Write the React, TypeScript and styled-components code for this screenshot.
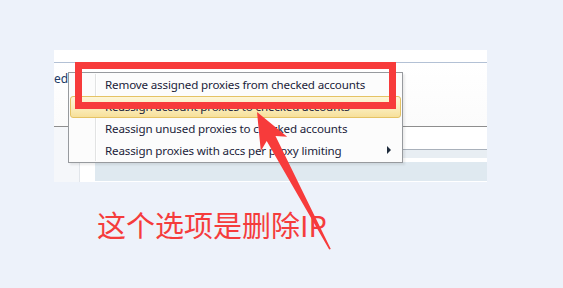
import React from "react";
import styled, { createGlobalStyle } from "styled-components";

const Global = createGlobalStyle`
  html, body { margin: 0; padding: 0; background: #edf2fa; }
  body { font-family: "Noto Sans", "Open Sans", sans-serif; }
`;

const Page = styled.div`
  position: relative;
  width: 563px;
  height: 288px;
  box-sizing: border-box;
  padding: 50px 0 0 54px;
  overflow: hidden;
`;

const Panel = styled.div`
  position: relative;
  width: 433px;
  height: 132px;
  background: #ffffff;
  display: flex;
  flex-direction: column;
`;

const TopStrip = styled.div`
  height: 12px;
  border-bottom: 1px solid #b3c1d5;
  background: #ffffff;
`;

const Toolbar = styled.div`
  height: 63px;
  border-bottom: 1px solid #8e8e8e;
  background: linear-gradient(#ffffff, #fbfbfb);
  display: flex;
  align-items: flex-start;
`;

const Label = styled.span`
  font-size: 12px;
  color: #203a66;
  margin-top: 8px;
  line-height: 16px;
`;

const Lower = styled.div`
  flex: 1;
  display: grid;
  grid-template-columns: 26px 1fr;
`;

const SideColumn = styled.div`
  background: #f5f7fa;
  border-right: 1px solid #e1e5ea;
`;

const ListArea = styled.div`
  display: flex;
  flex-direction: column;
`;

const BlankRow = styled.div`
  height: 22px;
  background: #ffffff;
  border-bottom: 1px solid #a9b1bb;
`;

const Band = styled.div<{ $h: number; $bg: string; $indent?: number }>`
  height: ${(p) => p.$h}px;
  background: ${(p) => p.$bg};
  margin-left: ${(p) => p.$indent ?? 0}px;
`;

const Menu = styled.div`
  position: absolute;
  left: 14px;
  top: 22px;
  width: 335px;
  height: 91px;
  box-sizing: border-box;
  border: 1px solid #979a9e;
  background: #fcfcfc;
  padding: 1px 1px;
  display: flex;
  flex-direction: column;
  box-shadow: 2px 2px 2px rgba(0, 0, 0, 0.08);
`;

const Gutter = styled.div`
  position: absolute;
  left: 26px;
  top: 1px;
  bottom: 1px;
  width: 1px;
  background: #e2e3e3;
  border-right: 1px solid #ffffff;
`;

const Item = styled.div<{ $active?: boolean }>`
  position: relative;
  height: 22px;
  box-sizing: border-box;
  display: flex;
  align-items: center;
  padding-left: 34px;
  padding-right: 8px;
  font-size: 11.6px;
  letter-spacing: -0.15px;
  color: #1b1d3a;
  white-space: nowrap;
  border: 1px solid ${(p) => (p.$active ? "#e5c365" : "transparent")};
  border-radius: 3px;
  background: ${(p) =>
    p.$active
      ? "linear-gradient(#fdf6da 0%, #fbeec0 50%, #f7e09a 100%)"
      : "transparent"};
`;

const ItemText = styled.span`
  flex: 1;
`;

const SubArrow = styled.span`
  width: 0;
  height: 0;
  border-top: 4px solid transparent;
  border-bottom: 4px solid transparent;
  border-left: 4px solid #1f2c3c;
  margin-right: 1px;
`;

const Highlight = styled.div`
  position: absolute;
  left: 21px;
  top: 12px;
  width: 321px;
  height: 47px;
  box-sizing: border-box;
  border: 7px solid #f73b3b;
`;

const Caption = styled.div`
  margin: 28px 0 0 43px;
  font-family: "Noto Sans CJK SC", "Noto Sans", sans-serif;
  font-size: 29px;
  line-height: 29px;
  color: #f53c3c;
  white-space: nowrap;
`;

const ArrowSvg = styled.svg`
  position: absolute;
  left: 0;
  top: 0;
  pointer-events: none;
`;

export default function App() {
  return (
    <>
      <Global />
      <Page>
        <Panel>
          <TopStrip />
          <Toolbar>
            <Label>ed</Label>
          </Toolbar>
          <Lower>
            <SideColumn />
            <ListArea>
              <BlankRow />
              <Band $h={8} $bg="#e8eef3" />
              <Band $h={4} $bg="#ffffff" />
              <Band $h={19} $bg="#dfe9f0" $indent={15} />
            </ListArea>
          </Lower>
          <Menu>
            <Gutter />
            <Item>
              <ItemText>Remove assigned proxies from checked accounts</ItemText>
            </Item>
            <Item $active>
              <ItemText>Reassign account proxies to checked accounts</ItemText>
            </Item>
            <Item>
              <ItemText>Reassign unused proxies to checked accounts</ItemText>
            </Item>
            <Item>
              <ItemText>Reassign proxies with accs per proxy limiting</ItemText>
              <SubArrow />
            </Item>
          </Menu>
          <Highlight />
        </Panel>
        <Caption>这个选项是删除IP</Caption>
        <ArrowSvg width="563" height="288" viewBox="0 0 563 288">
          <polygon
            points="257,112 287.2,136.7 275.5,136.1 330.8,249 329.2,249.6 266.7,140.9 260.8,150.9"
            fill="#f73b3b"
          />
        </ArrowSvg>
      </Page>
    </>
  );
}
